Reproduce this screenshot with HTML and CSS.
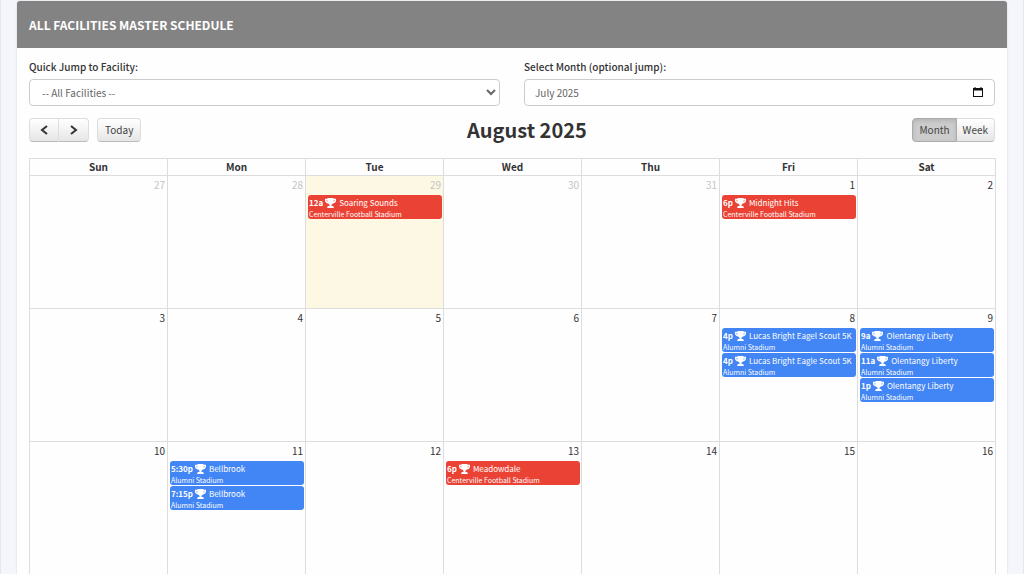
FILE: index.html
```
<!DOCTYPE html>
<html lang="en">
<head>
    <meta charset="UTF-8">
    <meta name="viewport" content="width=device-width, initial-scale=1.0">
    <title>All Facilities Master Schedule</title>
    <link rel="stylesheet" href="styles.css">
</head>
<body>
    <svg width="0" height="0" class="sprite" aria-hidden="true">
        <symbol id="trophy" viewBox="0 0 11 10">
            <path d="M2.500 0h6v.8H11v1.700C11 4.200 9.600 5.300 7.800 5.500 7.400 6.200 6.800 6.600 6.500 6.800V8H8q.8.300.8 2H2.200q0-1.700.8-2h1.500V6.800C4.200 6.600 3.600 6.200 3.200 5.500 1.400 5.300 0 4.200 0 2.500V.8h2.500zM1.300 2.200c.1.700.5 1.200 1.200 1.500q-.2-.7-.2-1.500zm7.400 0q0 .8-.2 1.500c.7-.3 1.100-.8 1.200-1.500z"/>
        </symbol>
    </svg>

    <div class="panel">
        <h1 class="panel-heading">ALL FACILITIES MASTER SCHEDULE</h1>
        <div class="panel-body">
            <form class="filters">
                <div class="form-group">
                    <label for="facility">Quick Jump to Facility:</label>
                    <select id="facility" class="form-control">
                        <option>-- All Facilities --</option>
                        <option>Alumni Stadium</option>
                        <option>Centerville Football Stadium</option>
                    </select>
                </div>
                <div class="form-group">
                    <label for="month">Select Month (optional jump):</label>
                    <div class="month-picker">
                        <input type="text" id="month" class="form-control" value="July 2025">
                        <svg viewBox="0 0 10 10"><path d="M1.500 0h1v1h5V0h1v1H10v9H0V1h1.500zM1 3.500V9h8V3.500z" fill-rule="evenodd"/></svg>
                    </div>
                </div>
            </form>

            <div class="toolbar">
                <div class="toolbar-left">
                    <div class="btn-group">
                        <button type="button" class="btn btn-icon" aria-label="Previous month">
                            <svg viewBox="0 0 10 10"><path d="M8 1 3 5l5 4"/></svg>
                        </button>
                        <button type="button" class="btn btn-icon" aria-label="Next month">
                            <svg viewBox="0 0 10 10"><path d="m2 1 5 4-5 4"/></svg>
                        </button>
                    </div>
                    <button type="button" class="btn">Today</button>
                </div>
                <h2>August 2025</h2>
                <div class="btn-group views">
                    <button type="button" class="btn active">Month</button>
                    <button type="button" class="btn">Week</button>
                </div>
            </div>

            <table class="calendar">
                <thead>
                    <tr><th>Sun</th><th>Mon</th><th>Tue</th><th>Wed</th><th>Thu</th><th>Fri</th><th>Sat</th></tr>
                </thead>
                <tbody>
                    <tr>
                        <td class="other"><div class="day">27</div></td>
                        <td class="other"><div class="day">28</div></td>
                        <td class="other today">
                            <div class="day">29</div>
                            <a href="#" class="event red">
                                <span class="title"><b>12a</b><svg><use href="#trophy"/></svg>Soaring Sounds</span>
                                <span class="place">Centerville Football Stadium</span>
                            </a>
                        </td>
                        <td class="other"><div class="day">30</div></td>
                        <td class="other"><div class="day">31</div></td>
                        <td>
                            <div class="day">1</div>
                            <a href="#" class="event red">
                                <span class="title"><b>6p</b><svg><use href="#trophy"/></svg>Midnight Hits</span>
                                <span class="place">Centerville Football Stadium</span>
                            </a>
                        </td>
                        <td><div class="day">2</div></td>
                    </tr>
                    <tr>
                        <td><div class="day">3</div></td>
                        <td><div class="day">4</div></td>
                        <td><div class="day">5</div></td>
                        <td><div class="day">6</div></td>
                        <td><div class="day">7</div></td>
                        <td>
                            <div class="day">8</div>
                            <a href="#" class="event">
                                <span class="title"><b>4p</b><svg><use href="#trophy"/></svg>Lucas Bright Eagel Scout 5K</span>
                                <span class="place">Alumni Stadium</span>
                            </a>
                            <a href="#" class="event">
                                <span class="title"><b>4p</b><svg><use href="#trophy"/></svg>Lucas Bright Eagle Scout 5K</span>
                                <span class="place">Alumni Stadium</span>
                            </a>
                        </td>
                        <td>
                            <div class="day">9</div>
                            <a href="#" class="event">
                                <span class="title"><b>9a</b><svg><use href="#trophy"/></svg>Olentangy Liberty</span>
                                <span class="place">Alumni Stadium</span>
                            </a>
                            <a href="#" class="event">
                                <span class="title"><b>11a</b><svg><use href="#trophy"/></svg>Olentangy Liberty</span>
                                <span class="place">Alumni Stadium</span>
                            </a>
                            <a href="#" class="event">
                                <span class="title"><b>1p</b><svg><use href="#trophy"/></svg>Olentangy Liberty</span>
                                <span class="place">Alumni Stadium</span>
                            </a>
                        </td>
                    </tr>
                    <tr>
                        <td><div class="day">10</div></td>
                        <td>
                            <div class="day">11</div>
                            <a href="#" class="event">
                                <span class="title"><b>5:30p</b><svg><use href="#trophy"/></svg>Bellbrook</span>
                                <span class="place">Alumni Stadium</span>
                            </a>
                            <a href="#" class="event">
                                <span class="title"><b>7:15p</b><svg><use href="#trophy"/></svg>Bellbrook</span>
                                <span class="place">Alumni Stadium</span>
                            </a>
                        </td>
                        <td><div class="day">12</div></td>
                        <td>
                            <div class="day">13</div>
                            <a href="#" class="event red">
                                <span class="title"><b>6p</b><svg><use href="#trophy"/></svg>Meadowdale</span>
                                <span class="place">Centerville Football Stadium</span>
                            </a>
                        </td>
                        <td><div class="day">14</div></td>
                        <td><div class="day">15</div></td>
                        <td><div class="day">16</div></td>
                    </tr>
                </tbody>
            </table>
        </div>
    </div>
</body>
</html>
```
FILE: styles.css
```
* { box-sizing: border-box; }
body {
    margin: 0;
    padding: 1px 16px 0;
    min-height: 100vh;
    font-family: "Noto Sans CJK SC", "Open Sans", sans-serif;
    font-size: 10px;
    line-height: 16px;
    color: #333;
    background-color: #f4f6fb;
    border-left: 1px solid #e1e8ee;
    border-right: 1px solid #e1e8ee;
}
.sprite { position: absolute; }
.panel {
    background-color: #fefefe;
    border-radius: 3px 3px 0 0;
    box-shadow: 0 0 2px rgba(0, 0, 0, 0.15);
}
.panel-heading {
    margin: 0;
    padding: 15px 12px 13px;
    font-size: 12px;
    line-height: 18px;
    font-weight: bold;
    color: #fff;
    background-color: #838383;
    border-bottom: 1px solid #838383;
    border-radius: 3px 3px 0 0;
}
.panel-body { padding: 11px 12px 0; }

/* filters */
.filters {
    display: grid;
    grid-template-columns: 1fr 1fr;
    gap: 24px;
}
.form-group label {
    display: block;
    margin-bottom: 4px;
    font-weight: 500;
}
.form-control {
    display: block;
    width: 100%;
    height: 27px;
    font-family: inherit;
    font-size: 10px;
    color: #666;
    background-color: #fff;
    border: 1px solid #ccc;
    border-radius: 4px;
}
select.form-control { padding: 0 0 0 8px; }
input.form-control { padding: 0 10px; }
.month-picker { position: relative; }
.month-picker svg {
    position: absolute;
    top: 8px;
    right: 12px;
    width: 10px;
    height: 10px;
    fill: #111;
}

/* toolbar */
.toolbar {
    display: flex;
    justify-content: space-between;
    align-items: center;
    margin: 8px 0 12px;
}
.toolbar h2 {
    margin: 0;
    font-size: 20px;
    line-height: 32px;
    font-weight: bold;
}
.toolbar-left { display: flex; gap: 8px; }
.btn-group { display: flex; }
.btn {
    height: 24px;
    padding: 0 7px;
    font-family: inherit;
    font-size: 10px;
    line-height: 20px;
    color: #444;
    background: linear-gradient(#fff, #e6e6e6);
    border: 1px solid #ddd;
    border-bottom-color: #bbb;
    border-radius: 4px;
}
.btn-icon {
    display: flex;
    align-items: center;
    justify-content: center;
    width: 30px;
    padding: 0;
}
.btn-icon svg {
    width: 10px;
    height: 10px;
    fill: none;
    stroke: #333;
    stroke-width: 2;
}
.btn-group .btn:first-child { border-radius: 4px 0 0 4px; }
.btn-group .btn:last-child { border-radius: 0 4px 4px 0; border-left: 0; }
.views .btn { padding: 0 6px; }
.btn.active {
    background: #ccc;
    border-color: #aaa;
    box-shadow: inset 0 2px 4px rgba(0, 0, 0, 0.12);
}

/* calendar */
.calendar {
    width: calc(100% + 1px);
    table-layout: fixed;
    border-collapse: collapse;
}
.calendar th, .calendar td {
    padding: 0;
    border: 1px solid #ddd;
}
.calendar th { line-height: 16px; }
.calendar td {
    height: 133px;
    vertical-align: top;
}
.calendar .today { background-color: #fcf8e3; }
.day {
    padding: 1px 2px 0 0;
    height: 19px;
    text-align: right;
}
.other .day { color: #c4c4c4; }
.event {
    display: block;
    height: 24px;
    margin: 0 1px 1px 2px;
    padding: 1px;
    overflow: hidden;
    white-space: nowrap;
    color: #fff;
    text-decoration: none;
    background-color: #4285f4;
    border-radius: 3px;
}
.event.red { background-color: #ea4335; }
.event .title {
    display: flex;
    align-items: center;
    overflow: hidden;
    font-size: 8px;
    line-height: 13px;
}
.event svg {
    flex: none;
    width: 11px;
    height: 10px;
    margin: 0 3px 0 2px;
    fill: #fff;
}
.event .place {
    display: block;
    font-size: 7px;
    line-height: 10px;
}
```
